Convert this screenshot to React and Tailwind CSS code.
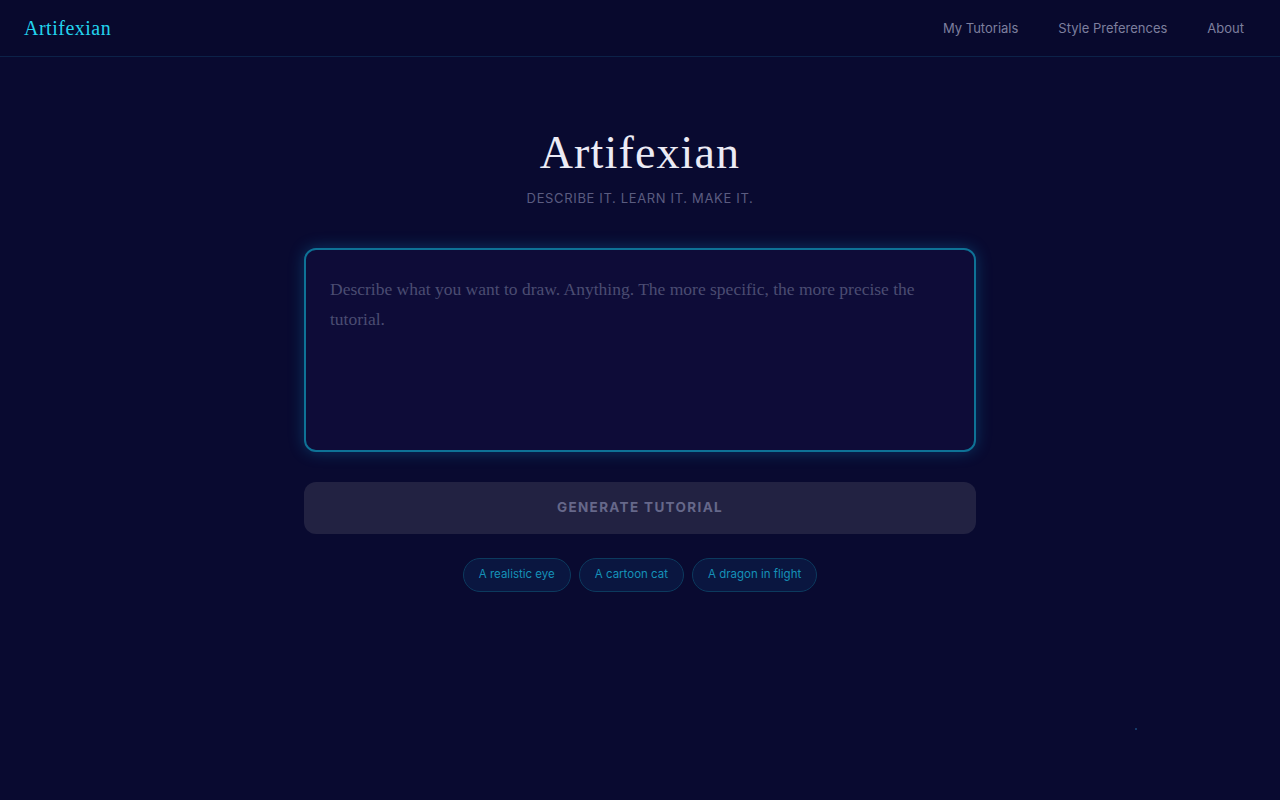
import { useState } from 'react';

const serif = { fontFamily: '"Liberation Serif", "DejaVu Serif", serif' };

export default function App() {
  const [text, setText] = useState('');
  const examples = ['A realistic eye', 'A cartoon cat', 'A dragon in flight'];

  return (
    <div className="relative min-h-[800px] bg-[#090a30] font-['Inter',sans-serif] text-white">
      {/* Header */}
      <header className="h-[57px] flex items-center justify-between pl-6 pr-9 border-b border-[#0c2248] bg-[#08092d]">
        <span className="text-[20px] text-[#22d3ee] tracking-wide" style={serif}>
          Artifexian
        </span>
        <nav className="flex items-center gap-10 pt-[2px] text-[13px] text-[#7d7f9e]">
          <a>My Tutorials</a>
          <a>Style Preferences</a>
          <a>About</a>
        </nav>
      </header>

      {/* Main */}
      <main className="flex flex-col items-center pt-[70px]">
        <h1 className="text-[46px] leading-[52px] text-[#ecebf5] tracking-wide" style={serif}>
          Artifexian
        </h1>
        <p className="mt-[10px] text-[13px] tracking-[0.05em] text-[#5b5c80] uppercase">
          Describe it. Learn it. Make it.
        </p>

        <div className="mt-[39px] w-[672px]">
          <textarea
            value={text}
            onChange={(e) => setText(e.target.value)}
            placeholder="Describe what you want to draw. Anything. The more specific, the more precise the tutorial."
            className="block w-full h-[204px] resize-none rounded-xl border-2 border-[#0e7296] bg-[#0e0c38] px-6 py-6 text-[17.5px] leading-[30px] text-[#d8d8ee] placeholder:text-[#4b4c72] outline-none shadow-[0_0_16px_rgba(14,165,233,0.28)]"
            style={serif}
          />

          <button className="mt-[30px] w-full h-[52px] rounded-xl bg-[#222242] text-[13.5px] font-bold tracking-[0.1em] text-[#66688a]">
            GENERATE TUTORIAL
          </button>

          <div className="mt-6 flex justify-center gap-2">
            {examples.map((ex) => (
              <button
                key={ex}
                className="h-[34px] px-[15px] rounded-full border border-[#0c3a5e] bg-[#0a1640] text-[11.5px] text-[#1591b8]"
              >
                {ex}
              </button>
            ))}
          </div>
        </div>
      </main>

      <span className="absolute left-[1135px] top-[728px] w-[2px] h-[2px] rounded-full bg-[#1a4a7a]" />
    </div>
  );
}
